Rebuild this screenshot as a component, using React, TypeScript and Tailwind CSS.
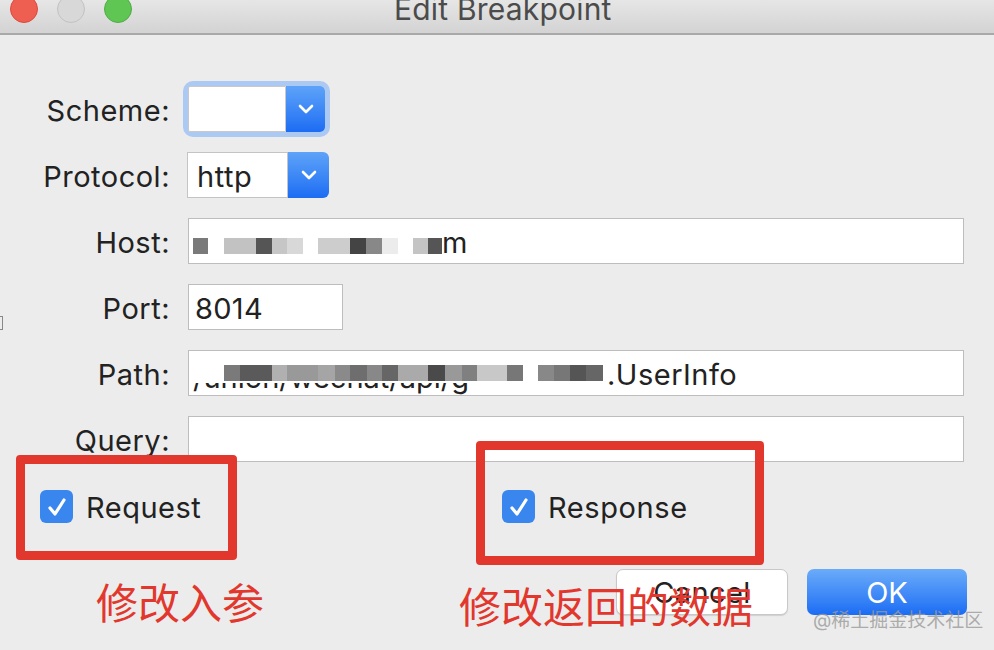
import React from "react";

type Cell = [number, string];

// mosaic strips: [width, colour] — "" is a gap
const hostCells: Cell[] = [
  [15, "#7a7a7a"], [16, ""], [32, "#c2c2c2"], [16, "#555555"], [15, "#c6c6c6"], [16, "#d8d8d8"],
  [15, ""], [32, "#cdcdcd"], [16, "#444444"], [16, "#888888"], [16, "#ececec"], [15, ""],
  [15, "#c4c4c4"], [14, "#555555"],
];

const pathCells: Cell[] = [
  [16, "#7a7a7a"], [32, "#5a5a5a"], [15, "#b0b0b0"], [31, "#999999"], [17, "#a5a5a5"], [15, "#8a8a8a"],
  [17, "#6e6e6e"], [15, "#888888"], [16, "#666666"], [30, "#aaaaaa"], [17, "#4a4a4a"], [17, "#999999"],
  [15, "#808080"], [30, "#c8c8c8"], [16, "#777777"], [15, ""], [16, "#888888"], [16, "#777777"],
  [16, "#555555"], [17, "#666666"],
];

function Mosaic({ cells }: { cells: Cell[] }) {
  return (
    <div className="flex h-[16px]">
      {cells.map(([w, c], i) => (
        <div key={i} className="h-full" style={{ width: w, background: c || "transparent" }} />
      ))}
    </div>
  );
}

function Row({ label, children }: { label: string; children: React.ReactNode }) {
  return (
    <div className="flex items-center h-[46px]">
      <div className="w-[170px] text-right text-[29px] tracking-[0.5px] text-[#222] pt-[4px]">{label}</div>
      {children}
    </div>
  );
}

function Chevron() {
  return (
    <svg width="16" height="10" viewBox="0 0 16 10" fill="none">
      <path d="M2 2l6 6 6-6" stroke="white" strokeWidth={2.6} strokeLinecap="round" strokeLinejoin="round" />
    </svg>
  );
}

function Check() {
  return (
    <div className="w-[33px] h-[33px] rounded-[6px] bg-[#3a86ef] flex items-center justify-center">
      <svg width="22" height="22" viewBox="0 0 22 22" fill="none">
        <path d="M4 12l5 6 9-14" stroke="white" strokeWidth={3.2} strokeLinecap="round" strokeLinejoin="round" />
      </svg>
    </div>
  );
}

export default function App() {
  return (
    <div
      className="w-[994px] h-[650px] bg-[#ececec] relative overflow-hidden text-[#222]"
      style={{ fontFamily: "Inter, 'Noto Sans CJK SC', sans-serif" }}
    >
      {/* title bar */}
      <div className="h-[35px] flex items-start bg-gradient-to-b from-[#e6e6e6] to-[#d3d3d3] border-b-2 border-[#a9a9a9]">
        <div className="flex gap-[19px] pl-[10px] -mt-[5px]">
          <div className="w-[28px] h-[28px] rounded-full bg-[#ee5f52] border border-[#e0483b]" />
          <div className="w-[28px] h-[28px] rounded-full bg-[#d8d8d8] border border-[#c2c2c2]" />
          <div className="w-[28px] h-[28px] rounded-full bg-[#5fc553] border border-[#4fae44]" />
        </div>
        <div className="ml-[262px] -mt-[7px] text-[30px] tracking-[0.2px] leading-none text-[#4b4b4b] pt-[1px]">Edit Breakpoint</div>
      </div>

      {/* form */}
      <div className="pt-[51px] flex flex-col gap-[20px]">
        <Row label="Scheme:">
          <div className="ml-[18px] w-[137px] h-[46px] flex rounded-[5px] shadow-[0_0_0_5px_#abc9f2]">
            <div className="flex-1 bg-white border border-[#c9c9c9] rounded-l-[2px]" />
            <div className="w-[39px] rounded-r-[5px] bg-gradient-to-b from-[#5ea3f8] to-[#1c6cf3] flex items-center justify-center">
              <Chevron />
            </div>
          </div>
        </Row>
        <Row label="Protocol:">
          <div className="ml-[17px] w-[142px] h-[46px] flex">
            <div className="flex-1 bg-white border border-[#c4c4c4] flex items-center pl-[9px] pt-[4px] text-[29px] tracking-[0.5px]">http</div>
            <div className="w-[41px] rounded-r-[6px] bg-gradient-to-b from-[#5ea3f8] to-[#1c6cf3] flex items-center justify-center">
              <Chevron />
            </div>
          </div>
        </Row>
        <Row label="Host:">
          <div className="ml-[18px] w-[776px] h-[46px] bg-white border border-[#bdbdbd] flex items-center pl-[4px]">
            <div className="mt-[10px]">
              <Mosaic cells={hostCells} />
            </div>
            <span className="text-[29px] mt-[3px]">m</span>
          </div>
        </Row>
        <Row label="Port:">
          <div className="ml-[18px] w-[155px] h-[46px] bg-white border border-[#bdbdbd] flex items-center pl-[6px] pt-[4px] text-[29px] tracking-[0.3px]">
            8014
          </div>
        </Row>
        <Row label="Path:">
          <div className="ml-[18px] w-[776px] h-[46px] bg-white border border-[#bdbdbd] flex items-center relative overflow-hidden pt-[4px]">
            <span className="text-[29px] pl-[4px] w-[424px] mt-[6px]">/union/wechat/api/g</span>
            <span className="text-[29px] tracking-[0.5px] -ml-[6px]">.UserInfo</span>
            {/* blurred cover */}
            <div className="absolute left-0 top-0 w-[418px] h-[32px] bg-white flex items-end pl-[35px] pb-[2px]">
              <Mosaic cells={pathCells} />
            </div>
          </div>
        </Row>
        <Row label="Query:">
          <div className="ml-[18px] w-[776px] h-[46px] bg-white border border-[#bdbdbd]" />
        </Row>
      </div>

      {/* checkboxes */}
      <div className="mt-[28px] flex items-center h-[33px]">
        <div className="w-[502px] flex items-center pl-[40px] gap-[13px]">
          <Check />
          <span className="text-[29px] tracking-[0.5px] pt-[2px]">Request</span>
        </div>
        <div className="flex items-center gap-[13px]">
          <Check />
          <span className="text-[29px] tracking-[0.6px] pt-[2px]">Response</span>
        </div>
      </div>

      {/* buttons */}
      <div className="mt-[46px] flex justify-end gap-[19px] pr-[27px]">
        <div className="w-[172px] h-[46px] rounded-[7px] bg-white border border-[#c8c8c8] shadow-[0_1px_1px_rgba(0,0,0,0.12)] flex items-center justify-center pt-[2px] text-[29px] tracking-[0.4px]">
          Cancel
        </div>
        <div className="w-[160px] h-[46px] rounded-[7px] bg-gradient-to-b from-[#6aabf9] to-[#1a6cf4] flex items-center justify-center pt-[2px] text-[29px] text-white">
          OK
        </div>
      </div>

      {/* annotations */}
      <div className="absolute left-[16px] top-[455px] w-[221px] h-[105px] border-[9px] border-[#e2372d] rounded-[4px]" />
      <div className="absolute left-[476px] top-[441px] w-[288px] h-[124px] border-[9px] border-[#e2372d] rounded-[4px]" />
      <div className="absolute left-[96px] top-[578px] text-[42px] leading-[52px] text-[#e2372d]">修改入参</div>
      <div className="absolute left-[459px] top-[582px] text-[42px] leading-[52px] text-[#e2372d]">修改返回的数据</div>
      <div className="absolute left-[813px] top-[608px] text-[19px] leading-[26px] text-[#9a9a9a]/80">@稀土掘金技术社区</div>
      <div className="absolute left-0 top-[316px] w-[3px] h-[14px] border border-l-0 border-[#888]" />
    </div>
  );
}
